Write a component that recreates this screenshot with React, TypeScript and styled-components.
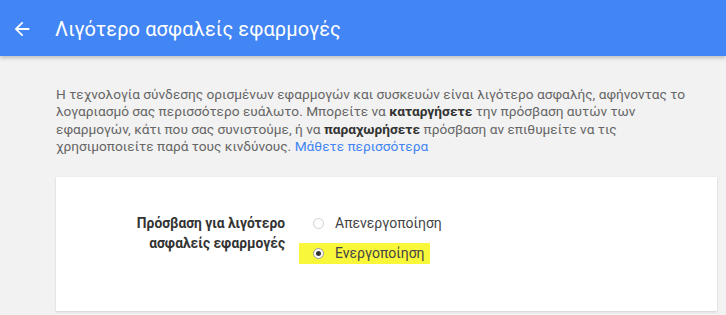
import styled, { createGlobalStyle } from "styled-components";

const GlobalStyle = createGlobalStyle`
	html, body {
		margin: 0;
		padding: 0;
		background: #f2f2f2;
		font-family: Roboto, "Noto Sans", Arial, sans-serif;
	}
`;

const Header = styled.header`
	height: 56px;
	background-color: #4285f4;
	box-shadow: 0 2px 4px rgba(0, 0, 0, 0.22);
	display: flex;
	align-items: center;
	padding: 2px 0 0 11px;
	box-sizing: border-box;
	position: relative;
	z-index: 1;
`;

const BackButton = styled.button`
	border: none;
	background: transparent;
	padding: 0;
	width: 22px;
	height: 22px;
	margin-right: 22px;
	display: flex;
	cursor: pointer;
	svg {
		width: 22px;
		height: 22px;
		fill: #fff;
	}
`;

const Title = styled.h1`
	margin: 0;
	font-size: 20px;
	font-weight: 400;
	color: #fff;
	letter-spacing: 0.1px;
`;

const Main = styled.main`
	padding: 30px 9px 4px 56px;
`;

const Intro = styled.p`
	margin: 0 0 21px;
	max-width: 652px;
	font-size: 13.7px;
	line-height: 17.4px;
	color: #666;
	b {
		color: #333;
		font-weight: 700;
	}
	a {
		color: #4285f4;
		text-decoration: none;
	}
`;

const Card = styled.section`
	background: #fff;
	box-shadow: 0 1px 2px rgba(0, 0, 0, 0.12), 0 0 1px rgba(0, 0, 0, 0.08);
	padding: 36px 0 47px;
	display: grid;
	grid-template-columns: 229px 1fr;
	column-gap: 14px;
	align-items: start;
`;

const SettingLabel = styled.div`
	text-align: right;
	font-size: 13.8px;
	line-height: 20px;
	font-weight: 700;
	color: #333;
`;

const Options = styled.div`
	display: flex;
	flex-direction: column;
	align-items: flex-start;
	gap: 9px;
`;

const Option = styled.label<{ $marked?: boolean }>`
	display: flex;
	align-items: center;
	gap: 11px;
	height: 21px;
	padding: 0 5px 0 14px;
	font-size: 14px;
	color: #444;
	background: ${(p) => (p.$marked ? "#f9f73a" : "transparent")};
	cursor: pointer;
`;

const Radio = styled.span<{ $checked?: boolean }>`
	width: 11px;
	height: 11px;
	box-sizing: border-box;
	border-radius: 50%;
	border: 1px solid ${(p) => (p.$checked ? "#9a9a9a" : "#d0d0d0")};
	background: #fff;
	display: flex;
	align-items: center;
	justify-content: center;
	&::after {
		content: "";
		width: 5px;
		height: 5px;
		border-radius: 50%;
		background: ${(p) => (p.$checked ? "#333" : "transparent")};
	}
`;

function App() {
	return (
		<>
			<GlobalStyle />
			<Header>
				<BackButton aria-label="Πίσω">
					<svg viewBox="0 0 24 24">
						<path d="M20 11H7.83l5.59-5.59L12 4l-8 8 8 8 1.41-1.41L7.83 13H20v-2z" />
					</svg>
				</BackButton>
				<Title>Λιγότερο ασφαλείς εφαρμογές</Title>
			</Header>
			<Main>
				<Intro>
					Η τεχνολογία σύνδεσης ορισμένων εφαρμογών και συσκευών είναι λιγότερο
					ασφαλής, αφήνοντας το λογαριασμό σας περισσότερο ευάλωτο. Μπορείτε να{" "}
					<b>καταργήσετε</b> την πρόσβαση αυτών των
					<br />
					εφαρμογών, κάτι που σας συνιστούμε, ή να <b>παραχωρήσετε</b> πρόσβαση αν
					επιθυμείτε να τις χρησιμοποιείτε παρά τους κινδύνους.{" "}
					<a href="#">Μάθετε περισσότερα</a>
				</Intro>
				<Card>
					<SettingLabel>
						Πρόσβαση για λιγότερο
						<br />
						ασφαλείς εφαρμογές
					</SettingLabel>
					<Options>
						<Option>
							<Radio />
							Απενεργοποίηση
						</Option>
						<Option $marked>
							<Radio $checked />
							Ενεργοποίηση
						</Option>
					</Options>
				</Card>
			</Main>
		</>
	);
}

export default App;
